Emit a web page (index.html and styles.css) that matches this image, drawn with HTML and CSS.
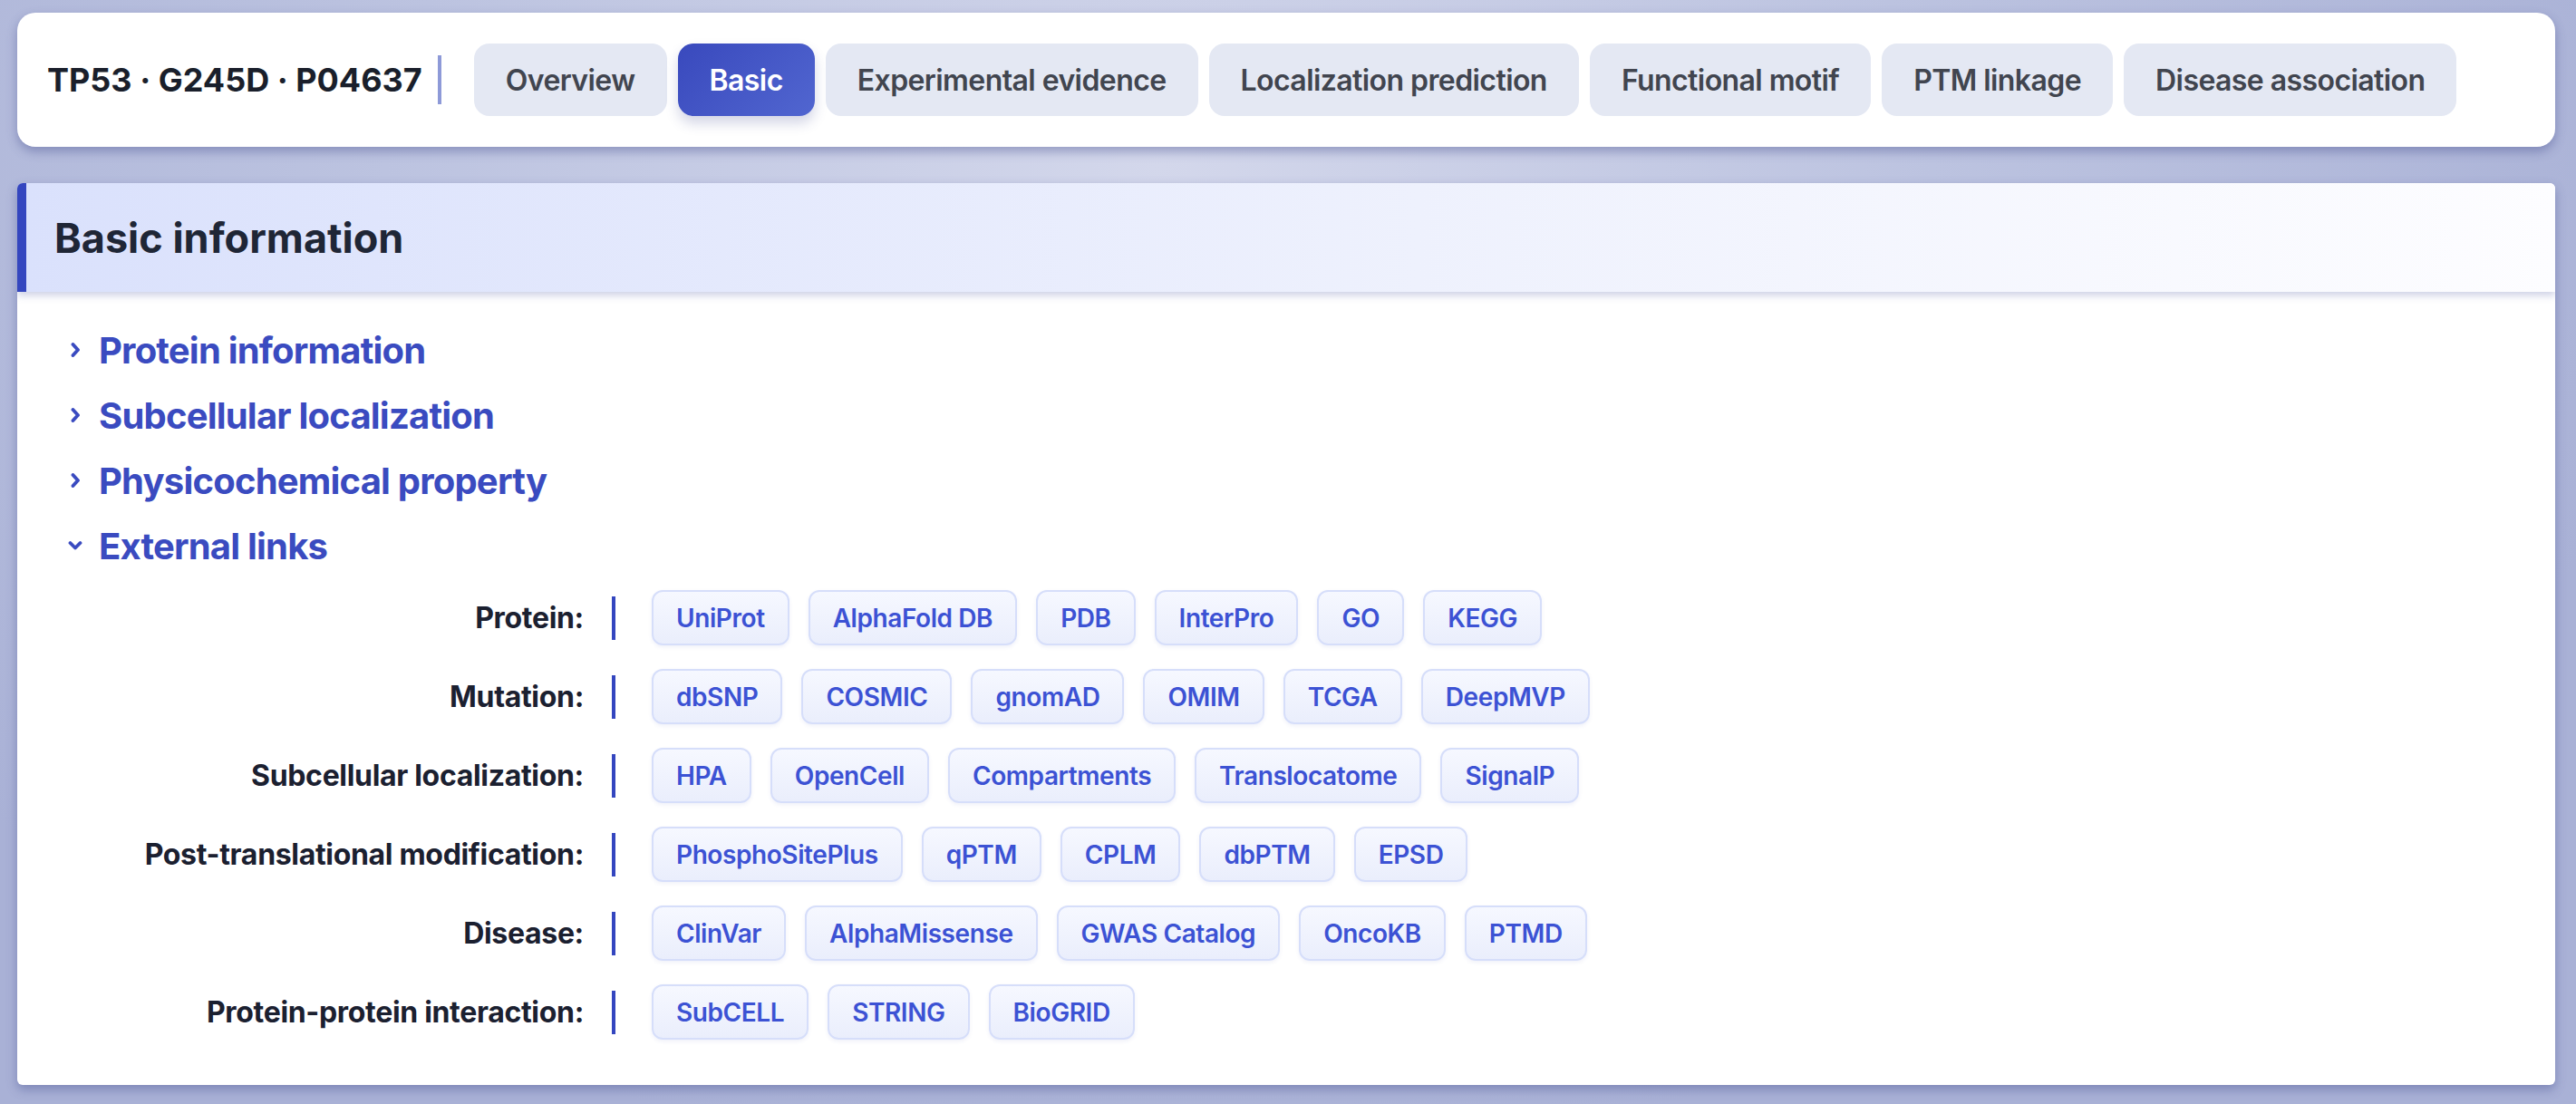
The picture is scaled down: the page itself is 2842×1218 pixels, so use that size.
FILE: index.html
```html
<!DOCTYPE html>
<html lang="en">
<head>
    <meta charset="UTF-8">
    <meta name="viewport" content="width=device-width, initial-scale=1.0">
    <title>TP53 G245D - Basic information</title>
    <link rel="stylesheet" href="styles.css">
</head>
<body>
    <div class="page">
        <header class="topbar">
            <div class="entry-id">TP53 · G245D · P04637</div>
            <nav class="tabs">
                <a class="tab" href="#">Overview</a>
                <a class="tab active" href="#">Basic</a>
                <a class="tab" href="#">Experimental evidence</a>
                <a class="tab" href="#">Localization prediction</a>
                <a class="tab" href="#">Functional motif</a>
                <a class="tab" href="#">PTM linkage</a>
                <a class="tab" href="#">Disease association</a>
            </nav>
        </header>

        <section class="panel">
            <h1 class="panel-title">Basic information</h1>
            <div class="panel-body">
                <div class="group-head">
                    <span class="chevron"><svg width="16" height="16" viewBox="0 0 16 16"><path d="M5.5 2 L11 8 L5.5 14"/></svg></span>
                    Protein information
                </div>
                <div class="group-head">
                    <span class="chevron"><svg width="16" height="16" viewBox="0 0 16 16"><path d="M5.5 2 L11 8 L5.5 14"/></svg></span>
                    Subcellular localization
                </div>
                <div class="group-head">
                    <span class="chevron"><svg width="16" height="16" viewBox="0 0 16 16"><path d="M5.5 2 L11 8 L5.5 14"/></svg></span>
                    Physicochemical property
                </div>
                <div class="group-head">
                    <span class="chevron"><svg width="16" height="16" viewBox="0 0 16 16"><path d="M2.5 5 L8 10.5 L13.5 5"/></svg></span>
                    External links
                </div>

                <div class="links">
                    <div class="link-row">
                        <div class="link-label">Protein:</div>
                        <div class="chips">
                            <a class="chip" href="#">UniProt</a>
                            <a class="chip" href="#">AlphaFold DB</a>
                            <a class="chip" href="#">PDB</a>
                            <a class="chip" href="#">InterPro</a>
                            <a class="chip" href="#">GO</a>
                            <a class="chip" href="#">KEGG</a>
                        </div>
                    </div>
                    <div class="link-row">
                        <div class="link-label">Mutation:</div>
                        <div class="chips">
                            <a class="chip" href="#">dbSNP</a>
                            <a class="chip" href="#">COSMIC</a>
                            <a class="chip" href="#">gnomAD</a>
                            <a class="chip" href="#">OMIM</a>
                            <a class="chip" href="#">TCGA</a>
                            <a class="chip" href="#">DeepMVP</a>
                        </div>
                    </div>
                    <div class="link-row">
                        <div class="link-label">Subcellular localization:</div>
                        <div class="chips">
                            <a class="chip" href="#">HPA</a>
                            <a class="chip" href="#">OpenCell</a>
                            <a class="chip" href="#">Compartments</a>
                            <a class="chip" href="#">Translocatome</a>
                            <a class="chip" href="#">SignalP</a>
                        </div>
                    </div>
                    <div class="link-row">
                        <div class="link-label">Post-translational modification:</div>
                        <div class="chips">
                            <a class="chip" href="#">PhosphoSitePlus</a>
                            <a class="chip" href="#">qPTM</a>
                            <a class="chip" href="#">CPLM</a>
                            <a class="chip" href="#">dbPTM</a>
                            <a class="chip" href="#">EPSD</a>
                        </div>
                    </div>
                    <div class="link-row">
                        <div class="link-label">Disease:</div>
                        <div class="chips">
                            <a class="chip" href="#">ClinVar</a>
                            <a class="chip" href="#">AlphaMissense</a>
                            <a class="chip" href="#">GWAS Catalog</a>
                            <a class="chip" href="#">OncoKB</a>
                            <a class="chip" href="#">PTMD</a>
                        </div>
                    </div>
                    <div class="link-row">
                        <div class="link-label">Protein-protein interaction:</div>
                        <div class="chips">
                            <a class="chip" href="#">SubCELL</a>
                            <a class="chip" href="#">STRING</a>
                            <a class="chip" href="#">BioGRID</a>
                        </div>
                    </div>
                </div>
            </div>
        </section>
    </div>
</body>
</html>
```

FILE: styles.css
```css
* {
    box-sizing: border-box;
}
html, body {
    margin: 0;
    padding: 0;
}
body {
    font-family: 'Inter', 'Noto Sans', sans-serif;
    background: radial-gradient(ellipse 60% 90% at 45% 15%, #d3d7eb 0%, #bcc3e0 50%, #a9b1d6 100%);
    min-height: 1218px;
    color: #1b2030;
}
.page {
    padding: 14px 23px 21px 19px;
}

/* top bar with entry id and tabs */
.topbar {
    background: #fff;
    border-radius: 20px;
    padding: 34px 33px;
    display: flex;
    align-items: center;
    box-shadow: 0 5px 12px rgba(70, 80, 145, 0.45);
}
.entry-id {
    font-size: 36px;
    font-weight: 700;
    color: #1a1f2b;
    padding-right: 17px;
    border-right: 4px solid #8e9ad8;
    line-height: 54px;
    margin-right: 36px;
    white-space: nowrap;
}
.tabs {
    display: flex;
    gap: 12px;
}
.tab {
    display: inline-flex;
    align-items: center;
    height: 80px;
    padding: 0 35px;
    border-radius: 17px;
    background: #e4e8f3;
    color: #41454f;
    font-size: 32px;
    font-weight: 600;
    letter-spacing: -0.018em;
    text-decoration: none;
    white-space: nowrap;
}
.tab.active {
    background: linear-gradient(135deg, #3949bd, #5166d0);
    color: #fff;
    box-shadow: 0 8px 14px rgba(60, 70, 140, 0.22);
}

/* main panel */
.panel {
    margin-top: 40px;
    background: #fff;
    border-radius: 6px;
    overflow: hidden;
    box-shadow: 0 5px 12px rgba(70, 80, 145, 0.45);
}
.panel-title {
    position: relative;
    margin: 0;
    height: 120px;
    display: flex;
    align-items: center;
    padding-left: 31px;
    border-left: 10px solid #3446bf;
    background: linear-gradient(90deg, #dae1fc 0%, #eef1fd 55%, #fdfdff 100%);
    font-size: 45px;
    font-weight: 700;
    color: #1f2636;
    box-shadow: 0 4px 8px rgba(80, 90, 160, 0.28);
}
.panel-body {
    padding: 28px 40px 50px 54px;
}
.group-head {
    display: flex;
    align-items: center;
    height: 72px;
    font-size: 40px;
    font-weight: 700;
    letter-spacing: -0.02em;
    color: #3a4bc0;
}
.chevron {
    width: 20px;
    margin-right: 16px;
    display: inline-flex;
    justify-content: center;
}
.chevron svg {
    fill: none;
    stroke: #3a4bc0;
    stroke-width: 3.8;
    stroke-linecap: round;
    stroke-linejoin: round;
}

/* external link rows */
.links {
    margin-top: 13px;
}
.link-row {
    display: flex;
    align-items: center;
    margin-bottom: 26px;
}
.link-row:last-child {
    margin-bottom: 0;
}
.link-label {
    box-sizing: content-box;
    width: 571px;
    padding-right: 31px;
    border-right: 4px solid #3446bf;
    text-align: right;
    line-height: 48px;
    font-size: 32px;
    font-weight: 700;
    letter-spacing: -0.01em;
    color: #1b2030;
    white-space: nowrap;
}
.chips {
    display: flex;
    gap: 21px;
    margin-left: 40px;
}
.chip {
    display: inline-flex;
    align-items: center;
    height: 61px;
    padding: 0 25px;
    border: 2px solid #d6defa;
    border-radius: 12px;
    background: linear-gradient(180deg, #f6f8ff, #eaeefc);
    color: #3c52d4;
    font-size: 28px;
    font-weight: 600;
    letter-spacing: -0.015em;
    text-decoration: none;
    white-space: nowrap;
    box-shadow: 0 2px 4px rgba(60, 80, 180, 0.08);
}
```
